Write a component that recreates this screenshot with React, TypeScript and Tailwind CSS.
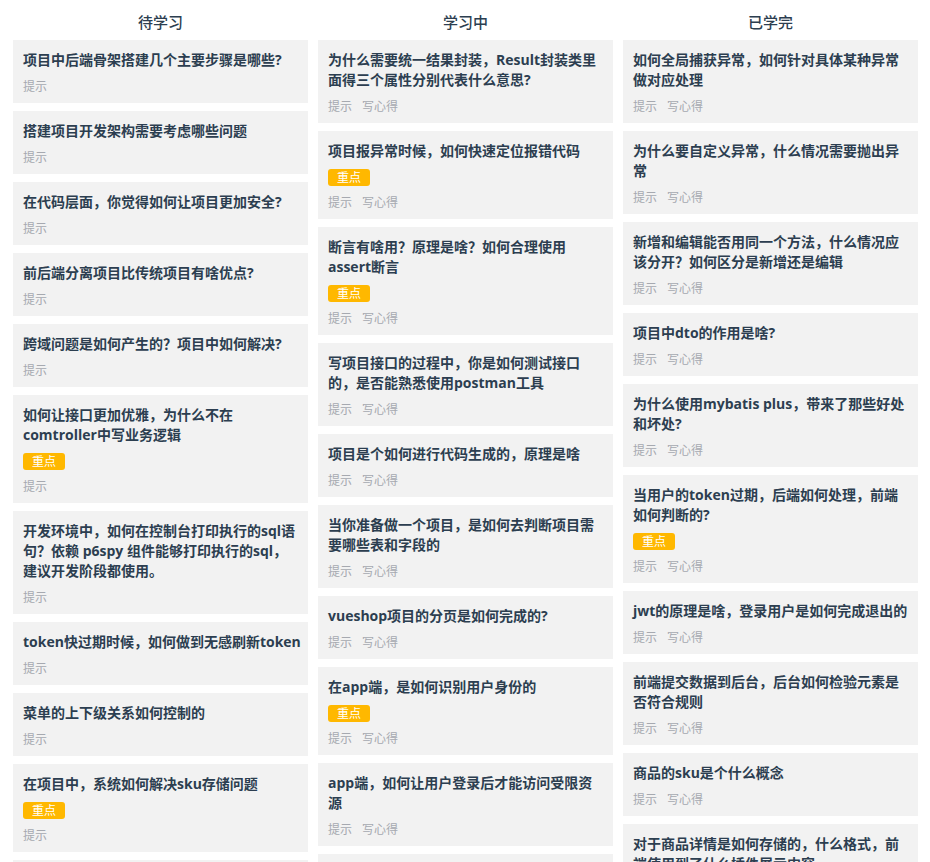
import React from "react";

type Card = { lines: string[]; badge?: boolean };

const todo: Card[] = [
  { lines: ["项目中后端骨架搭建几个主要步骤是哪些?"] },
  { lines: ["搭建项目开发架构需要考虑哪些问题"] },
  { lines: ["在代码层面，你觉得如何让项目更加安全?"] },
  { lines: ["前后端分离项目比传统项目有啥优点?"] },
  { lines: ["跨域问题是如何产生的？项目中如何解决?"] },
  { lines: ["如何让接口更加优雅，为什么不在", "comtroller中写业务逻辑"], badge: true },
  {
    lines: [
      "开发环境中，如何在控制台打印执行的sql语",
      "句？依赖 p6spy 组件能够打印执行的sql，",
      "建议开发阶段都使用。",
    ],
  },
  { lines: ["token快过期时候，如何做到无感刷新token"] },
  { lines: ["菜单的上下级关系如何控制的"] },
  { lines: ["在项目中，系统如何解决sku存储问题"], badge: true },
  { lines: ["如何防止表单重复提交"] },
];

const doing: Card[] = [
  { lines: ["为什么需要统一结果封装，Result封装类里", "面得三个属性分别代表什么意思?"] },
  { lines: ["项目报异常时候，如何快速定位报错代码"], badge: true },
  { lines: ["断言有啥用？原理是啥？如何合理使用", "assert断言"], badge: true },
  { lines: ["写项目接口的过程中，你是如何测试接口", "的，是否能熟悉使用postman工具"] },
  { lines: ["项目是个如何进行代码生成的，原理是啥"] },
  { lines: ["当你准备做一个项目，是如何去判断项目需", "要哪些表和字段的"] },
  { lines: ["vueshop项目的分页是如何完成的?"] },
  { lines: ["在app端，是如何识别用户身份的"], badge: true },
  { lines: ["app端，如何让用户登录后才能访问受限资", "源"] },
  { lines: ["项目中如何实现文件上传"] },
];

const done: Card[] = [
  { lines: ["如何全局捕获异常，如何针对具体某种异常", "做对应处理"] },
  { lines: ["为什么要自定义异常，什么情况需要抛出异", "常"] },
  { lines: ["新增和编辑能否用同一个方法，什么情况应", "该分开？如何区分是新增还是编辑"] },
  { lines: ["项目中dto的作用是啥?"] },
  { lines: ["为什么使用mybatis plus，带来了那些好处", "和坏处?"] },
  { lines: ["当用户的token过期，后端如何处理，前端", "如何判断的?"], badge: true },
  { lines: ["jwt的原理是啥，登录用户是如何完成退出的"] },
  { lines: ["前端提交数据到后台，后台如何检验元素是", "否符合规则"] },
  { lines: ["商品的sku是个什么概念"] },
  { lines: ["对于商品详情是如何存储的，什么格式，前", "端使用到了什么插件展示内容"] },
];

function CardView({ card, note }: { card: Card; note: boolean }) {
  return (
    <div className="bg-[#f2f2f2] px-[10px] pt-[10px] pb-[7px]">
      <div className="text-[14px] leading-[20px] font-bold text-[#2c3e50]">
        {card.lines.map((l, i) => (
          <div key={i} className="whitespace-nowrap">
            {l}
          </div>
        ))}
      </div>
      {card.badge && (
        <div className="mt-[8px] flex">
          <span className="flex h-[17px] items-center rounded-[3px] bg-[#ffb800] px-[9px] text-[12px] leading-[17px] text-white">
            重点
          </span>
        </div>
      )}
      <div className="mt-[8px] flex gap-[10px] text-[12px] leading-[18px] text-[#a6a9b0]">
        <span>提示</span>
        {note && <span>写心得</span>}
      </div>
    </div>
  );
}

function Column({ title, cards, note }: { title: string; cards: Card[]; note: boolean }) {
  return (
    <div className="flex flex-col">
      <div className="h-10 pt-[12px] text-center text-[15px] leading-[20px] font-medium text-[#2c3e50]">
        {title}
      </div>
      <div className="flex flex-col gap-[8px]">
        {cards.map((c, i) => (
          <CardView key={i} card={c} note={note} />
        ))}
      </div>
    </div>
  );
}

export default function App() {
  return (
    <div className="h-[862px] overflow-hidden bg-white font-['Open_Sans','Noto_Sans_CJK_SC',sans-serif]">
      <div className="grid grid-cols-3 gap-[10px] pl-[13px] pr-[12px]">
        <Column title="待学习" cards={todo} note={false} />
        <Column title="学习中" cards={doing} note={true} />
        <Column title="已学完" cards={done} note={true} />
      </div>
    </div>
  );
}
